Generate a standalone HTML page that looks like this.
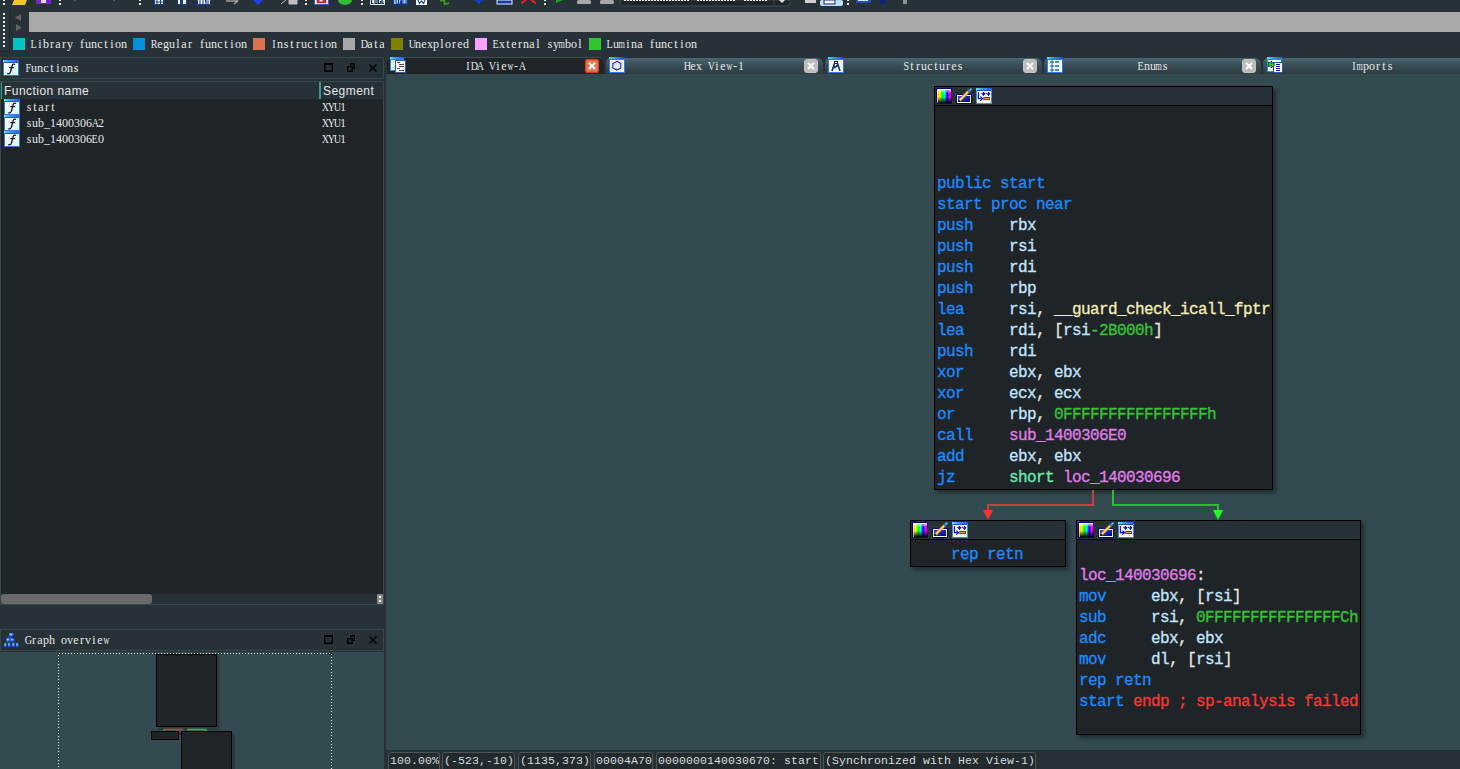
<!DOCTYPE html>
<html><head><meta charset="utf-8">
<style>
*{margin:0;padding:0;box-sizing:border-box}
html,body{width:1460px;height:769px;overflow:hidden;background:#263238;position:relative}
.a{position:absolute}
.ui{font-family:"Liberation Serif",serif;font-size:12px;color:#e8e8e8;white-space:pre;line-height:16px}
.code{font-family:"Liberation Mono",monospace;font-size:16px;letter-spacing:-0.6px;white-space:pre;line-height:21px;-webkit-text-stroke:0.3px currentColor}
.sans{font-family:"Liberation Sans",sans-serif;font-size:12px;letter-spacing:0.45px;color:#e8e8e8;white-space:pre}
.sq{position:absolute;top:38px;width:12px;height:12px}
.node{position:absolute;background:#1e2428;border:1px solid #000;box-shadow:3px 3px 4px rgba(0,0,0,0.38)}
.nh{position:absolute;left:0;top:0;right:0;height:19px;background:#263238;border-bottom:1px solid #000}
.kw{color:#1a8cff}.op{color:#c4e6ff}.pu{color:#e6e6da}.num{color:#34c434}.nm{color:#e07ee8}.yl{color:#f6eeb4}.sh{color:#62f0b2}.rd{color:#ff3434}
.st{border:1px solid #4e5456;border-radius:3px;background:#222a2e;font-family:"Liberation Mono",monospace;font-size:11.5px;color:#d4dede;white-space:pre;line-height:15px;padding-left:1px;padding-top:0px;letter-spacing:0.1px}
.ui i{font-style:normal;display:inline-block;width:6px;text-align:center}
.ui i.w b{font-weight:normal;display:inline-block;transform:scaleX(0.68);margin:0 -3px}
.ui i.u b{font-weight:normal;display:inline-block;transform:scaleX(0.84);margin:0 -3px}
</style></head><body>

<!-- toolbar -->
<div class="a" style="left:0;top:9px;width:10px;height:43px;background:#28363b;border-right:1px solid #1f2a2e;border-bottom:1px solid #1f2a2e"></div>
<svg class="a" style="left:0;top:0" width="960" height="52">
<g fill="#e8e8e8">
<rect x="3" y="0" width="2" height="1"/><rect x="3" y="3" width="2" height="2"/>
<rect x="3" y="13" width="2" height="2"/><rect x="3" y="17" width="2" height="2"/><rect x="3" y="21" width="2" height="2"/><rect x="3" y="25" width="2" height="2"/><rect x="3" y="29" width="2" height="2"/><rect x="3" y="33" width="2" height="2"/><rect x="3" y="37" width="2" height="2"/><rect x="3" y="41" width="2" height="2"/><rect x="3" y="45" width="2" height="2"/>
<rect x="59" y="0" width="2" height="1"/><rect x="59" y="3" width="2" height="2"/>
<rect x="139" y="0" width="2" height="1"/><rect x="139" y="3" width="2" height="2"/>
<rect x="305" y="0" width="2" height="1"/><rect x="305" y="3" width="2" height="2"/>
<rect x="361" y="0" width="2" height="1"/><rect x="361" y="3" width="2" height="2"/>
<rect x="544" y="0" width="2" height="1"/><rect x="544" y="3" width="2" height="2"/>
<rect x="847" y="0" width="2" height="1"/><rect x="847" y="3" width="2" height="2"/>
</g>
<path d="M15 17.5 L21 14 V21 Z" fill="#646464"/>
<path d="M22 27.5 L16 24 V31 Z" fill="#646464"/>
<path d="M14 0 H27 L25 5 H12 Z" fill="#f2c830"/>
<rect x="36" y="0" width="15" height="4" fill="#7a20d8"/><rect x="41" y="0" width="5" height="3" fill="#e0e0ff"/>
<path d="M74 1 L76 0 M113 1 L115 0" stroke="#707070"/>
<path d="M154.5 0 V4.5 H163.5 V0" fill="#f4f8ff" stroke="#1a3a90"/><path d="M157 0 V4 M160.5 0 V4 M155.5 2 H162.5" stroke="#1a3a90"/>
<path d="M177.5 0 V4.5 H186.5 V0" fill="#f4f8ff" stroke="#1a3a90"/><rect x="180" y="0" width="3" height="4" fill="#1a3a90"/>
<path d="M197.5 0 V4.5 H210.5 V0" fill="#f4f8ff" stroke="#1a3a90"/><path d="M200 0 V4 M203 0 V4 M205 0 H206 V4 M208 0 V4" stroke="#1a3a90"/>
<path d="M226 1 H236 L238 0 M234 4 L238 1" stroke="#a0a0a0" stroke-width="1.5"/>
<path d="M253 0 H263 L258 5 Z" fill="#2040f0"/>
<path d="M281 4 L286 0 M289 0 H297 V4 H289 Z" fill="#c0c0c0" stroke="#c0c0c0"/>
<path d="M314.5 0 V4.5 H328.5 V0" fill="#f4f4ff" stroke="#3060d0"/><path d="M317 0 H326 V3 H317 Z M320 0 V3 M323 0 V3" fill="#d02020" stroke="#d02020" stroke-width="0.5"/><rect x="319.5" y="0" width="3" height="1.5" fill="#fff"/>
<ellipse cx="345" cy="0" rx="7" ry="5" fill="#30c030"/>
<rect x="370" y="0" width="15" height="5" fill="#e8f2f8"/><path d="M371.5 0 V3.5 H373.5 M375 0 V3.5 H377 V0 M378.5 0 V3.5 H380.5 V1 M382 0 V3.5 H384 M382 2 H383.5" stroke="#103a50" stroke-width="1.2" fill="none"/>
<rect x="393" y="0" width="15" height="5" fill="#1030a0"/><path d="M394.5 0 V3.5 H396 V0 M397.5 0 V3.5 M399.5 3.5 V0 H401 M403 0 V3.5 M404.5 0 V3.5 M406 0 V3.5" stroke="#a0d8ff" stroke-width="1" fill="none"/>
<rect x="416" y="0" width="11" height="5" fill="#eef4fc"/><path d="M418 0 L419.5 3.5 L421.5 1 L423.5 3.5 L425 0" stroke="#204090" stroke-width="1.1" fill="none"/>
<path d="M440 1 Q444 -1 444 2 Q444 5 449 3 M444.5 0 V5" stroke="#40a020" stroke-width="1.4" fill="none"/>
<path d="M479 0 V4 M475 0 L479 2 L483 0" stroke="#2040f0" stroke-width="1.5"/>
<rect x="497" y="0" width="15" height="4" fill="#1a3aa0" stroke="#e0f0ff"/>
<path d="M521 3.5 L526 0 M536 3.5 L531 0" stroke="#f02020" stroke-width="1.8"/>
<path d="M556 0 H563 L556 3 Z" fill="#20a020"/>
<rect x="577" y="0" width="14" height="4" rx="1.5" fill="#a8a8a8"/>
<rect x="600" y="0" width="14" height="4" rx="1.5" fill="#a8a8a8"/>
<path d="M620 0 V2 Q620 6 625 6 H786 Q790 6 790 2 V0 Z" fill="#1e2428" stroke="#3a4c50"/>
<path d="M624 0 H690 M697 0 H736 M744 0 H768" stroke="#f0f0f0" stroke-width="2" stroke-dasharray="2 1"/>
<path d="M774 0 V5" stroke="#3a4c50"/>
<path d="M779 0 L782 3 L785 0 Z" fill="#e0e0e0"/>
<rect x="805" y="0" width="11" height="3" fill="#d0d0d0"/>
<rect x="820" y="0" width="23" height="6" rx="2" fill="#bfe0f8"/><rect x="824" y="0" width="11" height="4" fill="#f0f8ff" stroke="#102080"/>
<rect x="856" y="0" width="15" height="3" fill="#2050c0"/><rect x="858" y="0" width="10" height="1" fill="#e0e8ff"/>
<rect x="880" y="0" width="6" height="4" fill="#102080"/>
<rect x="903" y="0" width="4" height="4" fill="#909090"/>
</svg>
<!-- legend row -->
<div class="sq" style="left:13px;background:#00c4c4"></div>
<div class="a ui" style="left:31px;top:36px"><i class="u"><b>L</b></i><i>i</i><i>b</i><i>r</i><i>a</i><i>r</i><i>y</i><i>&nbsp;</i><i>f</i><i>u</i><i>n</i><i>c</i><i>t</i><i>i</i><i>o</i><i>n</i></div>
<div class="sq" style="left:133px;background:#0090dc"></div>
<div class="a ui" style="left:151px;top:36px"><i class="u"><b>R</b></i><i>e</i><i>g</i><i>u</i><i>l</i><i>a</i><i>r</i><i>&nbsp;</i><i>f</i><i>u</i><i>n</i><i>c</i><i>t</i><i>i</i><i>o</i><i>n</i></div>
<div class="sq" style="left:253px;background:#d87450"></div>
<div class="a ui" style="left:271px;top:36px"><i class="u"><b>I</b></i><i>n</i><i>s</i><i>t</i><i>r</i><i>u</i><i>c</i><i>t</i><i>i</i><i>o</i><i>n</i></div>
<div class="sq" style="left:343px;background:#a8a8a8"></div>
<div class="a ui" style="left:361px;top:36px"><i class="u"><b>D</b></i><i>a</i><i>t</i><i>a</i></div>
<div class="sq" style="left:391px;background:#808000"></div>
<div class="a ui" style="left:409px;top:36px"><i class="u"><b>U</b></i><i>n</i><i>e</i><i>x</i><i>p</i><i>l</i><i>o</i><i>r</i><i>e</i><i>d</i></div>
<div class="sq" style="left:475px;background:#ffa0ff"></div>
<div class="a ui" style="left:493px;top:36px"><i class="u"><b>E</b></i><i>x</i><i>t</i><i>e</i><i>r</i><i>n</i><i>a</i><i>l</i><i>&nbsp;</i><i>s</i><i>y</i><i class="w"><b>m</b></i><i>b</i><i>o</i><i>l</i></div>
<div class="sq" style="left:589px;background:#30c430"></div>
<div class="a ui" style="left:607px;top:36px"><i class="u"><b>L</b></i><i>u</i><i class="w"><b>m</b></i><i>i</i><i>n</i><i>a</i><i>&nbsp;</i><i>f</i><i>u</i><i>n</i><i>c</i><i>t</i><i>i</i><i>o</i><i>n</i></div>

<!-- nav band -->
<div class="a" style="left:29px;top:12px;width:1431px;height:20px;background:#a9a9a9"></div>

<!-- left panel: functions -->
<div class="a" style="left:0;top:57px;width:384px;height:22px;border:1px solid #34484a;background:#263238"></div>
<div class="a ui" style="left:25px;top:60px"><i class="u"><b>F</b></i><i>u</i><i>n</i><i>c</i><i>t</i><i>i</i><i>o</i><i>n</i><i>s</i></div>
<div class="a" style="left:0;top:81px;width:384px;height:524px;border:1px solid #34484a;background:#1e2428"></div>
<div class="a" style="left:1px;top:82px;width:382px;height:17px;background:#263238"></div>
<div class="a" style="left:1px;top:82px;width:1px;height:17px;background:#3a9a8a"></div>
<div class="a" style="left:319px;top:82px;width:2px;height:17px;background:#3a9a8a"></div>
<div class="a sans" style="left:4px;top:84px">Function name</div>
<div class="a sans" style="left:323px;top:84px">Segment</div>
<div class="a ui" style="left:26px;top:99px"><i>s</i><i>t</i><i>a</i><i>r</i><i>t</i></div>
<div class="a ui" style="left:26px;top:115px"><i>s</i><i>u</i><i>b</i><i>_</i><i>1</i><i>4</i><i>0</i><i>0</i><i>3</i><i>0</i><i>6</i><i class="u"><b>A</b></i><i>2</i></div>
<div class="a ui" style="left:26px;top:131px"><i>s</i><i>u</i><i>b</i><i>_</i><i>1</i><i>4</i><i>0</i><i>0</i><i>3</i><i>0</i><i>6</i><i class="u"><b>E</b></i><i>0</i></div>
<div class="a ui" style="left:322px;top:99px"><i class="u"><b>X</b></i><i class="u"><b>Y</b></i><i class="u"><b>U</b></i><i>1</i></div>
<div class="a ui" style="left:322px;top:115px"><i class="u"><b>X</b></i><i class="u"><b>Y</b></i><i class="u"><b>U</b></i><i>1</i></div>
<div class="a ui" style="left:322px;top:131px"><i class="u"><b>X</b></i><i class="u"><b>Y</b></i><i class="u"><b>U</b></i><i>1</i></div>
<div class="a" style="left:1px;top:594px;width:382px;height:10px;background:#263238"></div>
<div class="a" style="left:1px;top:594px;width:151px;height:10px;background:#6a6a6a;border-radius:3px"></div>

<div class="a" style="left:377px;top:594px;width:6px;height:10px;background:#8a8a8a;border-radius:1px"></div><div class="a" style="left:379px;top:596px;width:2px;height:2px;background:#fff"></div><div class="a" style="left:379px;top:600px;width:2px;height:2px;background:#fff"></div>
<!-- graph overview -->
<div class="a" style="left:0;top:629px;width:384px;height:22px;border:1px solid #34484a;background:#263238"></div>
<div class="a ui" style="left:25px;top:632px"><i class="u"><b>G</b></i><i>r</i><i>a</i><i>p</i><i>h</i><i>&nbsp;</i><i>o</i><i>v</i><i>e</i><i>r</i><i>v</i><i>i</i><i>e</i><i class="w"><b>w</b></i></div>
<div class="a" style="left:0;top:652px;width:384px;height:117px;background:#324a50"></div>

<!-- splitter -->
<div class="a" style="left:384px;top:75px;width:2px;height:694px;background:#263238"></div>

<!-- graph area -->
<div class="a" style="left:386px;top:74px;width:1074px;height:676px;background:#324a50"></div>


<svg width="0" height="0" style="position:absolute">
<defs>
<linearGradient id="rb" x1="0" y1="0" x2="1" y2="0">
<stop offset="0" stop-color="#ffa000"/><stop offset="0.18" stop-color="#ffff00"/><stop offset="0.38" stop-color="#00ff00"/><stop offset="0.55" stop-color="#00ffff"/><stop offset="0.72" stop-color="#0000ff"/><stop offset="0.88" stop-color="#ff00ff"/><stop offset="1" stop-color="#ff0060"/>
</linearGradient>
<linearGradient id="dk" x1="0" y1="0" x2="0" y2="1">
<stop offset="0" stop-color="#fff" stop-opacity="0.85"/><stop offset="0.3" stop-color="#fff" stop-opacity="0"/><stop offset="0.55" stop-color="#000" stop-opacity="0"/><stop offset="1" stop-color="#000" stop-opacity="1"/>
</linearGradient>
<linearGradient id="bl" x1="0" y1="0" x2="1" y2="1"><stop offset="0" stop-color="#3050e0"/><stop offset="1" stop-color="#000090"/></linearGradient>
<linearGradient id="tb" x1="0" y1="0" x2="1" y2="0"><stop offset="0" stop-color="#50e8ff"/><stop offset="0.4" stop-color="#3a9af0"/><stop offset="1" stop-color="#2a5ae0"/></linearGradient>
<symbol id="ic1" viewBox="0 0 16 16">
<rect x="0" y="0" width="16" height="16" fill="#000088"/>
<rect x="1" y="1" width="14" height="14" fill="url(#rb)"/>
<rect x="1" y="1" width="14" height="14" fill="url(#dk)"/>
<rect x="1" y="1" width="14" height="1" fill="#fff" opacity="0.9"/>
<rect x="1" y="1" width="1" height="14" fill="#fff" opacity="0.6"/>
</symbol>
<symbol id="ic2" viewBox="0 0 16 16">
<rect x="0" y="6" width="16" height="10" fill="#000088"/>
<rect x="1" y="7" width="14" height="8" fill="#f4fcff"/>
<rect x="2" y="8" width="12" height="6" fill="url(#bl)"/>
<path d="M3.6 12.4 L13.2 2.8" stroke="#e07a20" stroke-width="3"/>
<path d="M3.6 12.4 L13.2 2.8" stroke="#ffe040" stroke-width="1.6"/>
<path d="M4 12 L12.6 3.4" stroke="#fff" stroke-width="0.7" stroke-dasharray="1 1"/>
<path d="M13 3 L15 1" stroke="#2a7ab0" stroke-width="3" stroke-linecap="round"/>
<path d="M13.6 2.4 L14.6 1.4" stroke="#fff" stroke-width="1"/>
<rect x="2.5" y="12.3" width="1.6" height="1.6" fill="#000"/>
</symbol>
<symbol id="ic3" viewBox="0 0 16 16">
<rect x="0" y="0" width="16" height="16" fill="#3a8af0"/>
<rect x="0" y="0" width="16" height="2" fill="url(#tb)"/>
<rect x="1" y="2" width="14" height="1" fill="#2a50d8"/>
<rect x="1" y="3" width="14" height="12" fill="#fbfeff"/>
<path d="M2.4 4.3 V10.6 H6.8" stroke="#0000f0" stroke-width="1.2" fill="none"/>
<path d="M4.3 8.6 L6.6 10.6 L4.3 12.6" stroke="#0000f0" stroke-width="1.1" fill="none"/>
<path d="M5.4 5.4 H15" stroke="#0000f0" stroke-width="1.1" stroke-dasharray="1.4 1"/>
<path d="M7.5 4 V7.5 M6.3 6.3 L7.5 7.6 L8.7 6.3 M12.5 4 V7.5 M11.3 6.3 L12.5 7.6 L13.7 6.3" stroke="#0000f0" stroke-width="1" fill="none"/>
<rect x="7.2" y="9" width="6.8" height="3" rx="0.8" fill="#900060"/>
<rect x="8" y="10" width="5.2" height="1.2" fill="#f0a040"/>
</symbol>

<linearGradient id="wg" x1="0" y1="0" x2="1" y2="0"><stop offset="0" stop-color="#40e0ff"/><stop offset="0.5" stop-color="#3080f0"/><stop offset="1" stop-color="#2040d0"/></linearGradient>
<symbol id="win" viewBox="0 0 16 16">
<rect x="0" y="0" width="16" height="16" fill="#2f7ae8"/>
<rect x="0" y="0" width="16" height="2" fill="url(#wg)"/>
<rect x="1" y="3" width="14" height="12" fill="#f4fcff"/>
</symbol>
<symbol id="tic0" viewBox="0 0 16 16">
<rect x="0" y="0" width="14" height="14" fill="#2f8af0"/>
<rect x="0" y="0" width="14" height="2" fill="url(#tb)"/>
<rect x="1" y="3" width="12" height="10" fill="#e6faff"/>
<rect x="5" y="3" width="11" height="13" fill="#2a5aa8"/>
<rect x="6" y="4" width="9" height="11" fill="#f6faff"/>
<path d="M7 5.5h3M9 7.5h5M9 9.5h5M7 11.5h3M9 13.5h5" stroke="#505050" stroke-width="1"/>
</symbol>
<symbol id="tic1" viewBox="0 0 16 16">
<use href="#win"/>
<path d="M7.8 4.3 L11.8 6.5 V10.9 L7.8 13.1 L3.8 10.9 V6.5 Z" fill="#e0ecff" stroke="#1a1aff" stroke-width="1.1"/>
</symbol>
<symbol id="tic2" viewBox="0 0 16 16">
<use href="#win"/>
<path d="M6.5 4.5 H9.5 V6.5 H6.5 Z" fill="none" stroke="#102a70" stroke-width="1.2"/>
<path d="M6.5 6.5 L4 14 M9.5 6.5 L12 14 M6 11 L10 8" stroke="#102a70" stroke-width="1.6" fill="none"/>
</symbol>
<symbol id="tic3" viewBox="0 0 16 16">
<use href="#win"/>
<path d="M5 3.5 L6.5 5 L5 6.5 L3.5 5 Z M5 7.5 L6.5 9 L5 10.5 L3.5 9 Z M5 11.5 L6.5 13 L5 14.5 L3.5 13 Z" fill="#10d0f0" stroke="#0a2ab0" stroke-width="0.8"/>
<path d="M8 5h4M8 9h4M8 13h4" stroke="#1060e0" stroke-width="1.4"/>
</symbol>
<symbol id="tic4" viewBox="0 0 16 16">
<rect x="0" y="0" width="15" height="15" fill="#2f8af0"/>
<rect x="0" y="0" width="15" height="2" fill="url(#tb)"/>
<rect x="1" y="3" width="13" height="11" fill="#f4fcff"/>
<rect x="6" y="5" width="10" height="11" fill="#2a5aa8"/>
<rect x="7" y="6" width="8" height="9" fill="#f6faff"/>
<rect x="9" y="7" width="4" height="1" fill="#1010b0"/><rect x="9" y="9" width="4" height="1" fill="#1010b0"/><rect x="9" y="11" width="4" height="1" fill="#1010b0"/><rect x="9" y="13" width="4" height="1" fill="#1010b0"/>
<path d="M1.5 5 L4.5 6.5 L4 4 L8 7.5 L4 11 L4.5 8.5 L1.5 9.5 Z" fill="#30d030" stroke="#004a10" stroke-width="0.9"/>
</symbol>
<linearGradient id="wf" x1="0" y1="0" x2="1" y2="1"><stop offset="0" stop-color="#ffffff"/><stop offset="1" stop-color="#d8f6ff"/></linearGradient>
<symbol id="fic" viewBox="0 0 16 16">
<rect x="0" y="0" width="16" height="16" fill="#3a7ae0"/>
<rect x="0" y="0" width="16" height="2" fill="url(#tb)"/>
<rect x="1" y="2" width="14" height="1" fill="#2a50d8"/>
<rect x="1" y="3" width="14" height="12" fill="url(#wf)"/>
<path d="M12 4.6 C10.8 3.9 9.7 4.1 9.3 5.3 L7.3 12.5 C6.9 13.7 5.8 14 4.2 13.7" stroke="#0a1838" stroke-width="1.3" fill="none"/>
<path d="M6.2 7.6 H10.8" stroke="#0a1838" stroke-width="1.2"/>
</symbol>
<radialGradient id="bx" cx="0.35" cy="0.4" r="0.7"><stop offset="0" stop-color="#a0d8ff"/><stop offset="0.5" stop-color="#3a80f0"/><stop offset="1" stop-color="#0a30c0"/></radialGradient>
<symbol id="ovic" viewBox="0 0 16 16">
<path d="M4.6 3.5 V5.2 M6.4 3.5 V5.2 M3 8.7 V10 M5.5 8.7 V10 M8.5 8.7 V10 M11 8.7 V10" stroke="#1a70e0" stroke-width="0.9"/>
<rect x="5" y="0" width="5" height="3.5" fill="url(#bx)"/>
<rect x="2.2" y="5.1" width="4.4" height="3.6" fill="url(#bx)"/>
<rect x="6.4" y="5.1" width="4.2" height="3.6" fill="url(#bx)"/>
<rect x="0.1" y="10" width="2.8" height="3.9" fill="url(#bx)"/>
<rect x="4" y="10" width="2.8" height="3.9" fill="url(#bx)"/>
<rect x="8.1" y="10" width="2.9" height="3.9" fill="url(#bx)"/>
<rect x="12" y="10" width="2.9" height="3.9" fill="url(#bx)"/>
</symbol>
<symbol id="pbtn" viewBox="0 0 56 10">
<path d="M0.75 0.75 H8.25 V8.25 H0.75 Z" fill="none" stroke="#000" stroke-width="1.5"/>
<rect x="0" y="0" width="9" height="2" fill="#000"/>
<path d="M26.75 0.75 H30.25 V5.25 H26.75 Z" fill="none" stroke="#000" stroke-width="1.5"/>
<path d="M23.75 3.75 H28.25 V8.25 H23.75 Z" fill="#263238" stroke="#000" stroke-width="1.5"/>
<path d="M45.5 1.5 L52.5 8.5 M52.5 1.5 L45.5 8.5" stroke="#000" stroke-width="1.4"/>
</symbol>
</defs></svg>
<div class="node" style="left:934px;top:86px;width:339px;height:404px"><div class="nh"><svg class="a" style="left:1px;top:1px" width="16" height="16"><use href="#ic1"/></svg><svg class="a" style="left:21px;top:1px" width="16" height="16"><use href="#ic2"/></svg><svg class="a" style="left:41px;top:1px" width="16" height="16"><use href="#ic3"/></svg></div><div class="a code" style="left:2px;top:24px">


<span class="kw">public start</span>
<span class="kw">start proc near</span>
<span class="kw">push</span>    <span class="op">rbx</span>
<span class="kw">push</span>    <span class="op">rsi</span>
<span class="kw">push</span>    <span class="op">rdi</span>
<span class="kw">push</span>    <span class="op">rbp</span>
<span class="kw">lea</span>     <span class="op">rsi</span><span class="pu">,</span><span class="op"> </span><span class="yl">__guard_check_icall_fptr</span>
<span class="kw">lea</span>     <span class="op">rdi</span><span class="pu">,</span><span class="op"> </span><span class="pu">[</span><span class="op">rsi</span><span class="num">-2B000h</span><span class="pu">]</span>
<span class="kw">push</span>    <span class="op">rdi</span>
<span class="kw">xor</span>     <span class="op">ebx</span><span class="pu">,</span><span class="op"> ebx</span>
<span class="kw">xor</span>     <span class="op">ecx</span><span class="pu">,</span><span class="op"> ecx</span>
<span class="kw">or</span>      <span class="op">rbp</span><span class="pu">,</span><span class="op"> </span><span class="num">0FFFFFFFFFFFFFFFFh</span>
<span class="kw">call</span>    <span class="nm">sub_1400306E0</span>
<span class="kw">add</span>     <span class="op">ebx</span><span class="pu">,</span><span class="op"> ebx</span>
<span class="kw">jz</span>      <span class="sh">short</span> <span class="nm">loc_140030696</span></div></div>
<div class="node" style="left:910px;top:520px;width:156px;height:47px"><div class="nh"><svg class="a" style="left:1px;top:1px" width="16" height="16"><use href="#ic1"/></svg><svg class="a" style="left:21px;top:1px" width="16" height="16"><use href="#ic2"/></svg><svg class="a" style="left:41px;top:1px" width="16" height="16"><use href="#ic3"/></svg></div><div class="a code" style="left:40px;top:24px"><span class="kw">rep retn</span></div></div>
<div class="node" style="left:1076px;top:520px;width:285px;height:215px"><div class="nh"><svg class="a" style="left:1px;top:1px" width="16" height="16"><use href="#ic1"/></svg><svg class="a" style="left:21px;top:1px" width="16" height="16"><use href="#ic2"/></svg><svg class="a" style="left:41px;top:1px" width="16" height="16"><use href="#ic3"/></svg></div><div class="a code" style="left:2px;top:24px">
<span class="nm">loc_140030696</span><span class="pu">:</span>
<span class="kw">mov</span>     <span class="op">ebx</span><span class="pu">,</span><span class="op"> </span><span class="pu">[</span><span class="op">rsi</span><span class="pu">]</span>
<span class="kw">sub</span>     <span class="op">rsi</span><span class="pu">,</span><span class="op"> </span><span class="num">0FFFFFFFFFFFFFFFCh</span>
<span class="kw">adc</span>     <span class="op">ebx</span><span class="pu">,</span><span class="op"> ebx</span>
<span class="kw">mov</span>     <span class="op">dl</span><span class="pu">,</span><span class="op"> </span><span class="pu">[</span><span class="op">rsi</span><span class="pu">]</span>
<span class="kw">rep retn</span>
<span class="kw">start</span> <span class="rd">endp ; sp-analysis failed</span></div></div>
<svg class="a" style="left:0;top:0" width="1460" height="769">
<path d="M1093 490 V505 H988 V511" stroke="#c84040" stroke-width="2" fill="none"/>
<path d="M983 510 L993 510 L988 520 Z" fill="#ff3232"/>
<path d="M1113 490 V505 H1218 V511" stroke="#28c028" stroke-width="2" fill="none"/>
<path d="M1213 510 L1223 510 L1218 520 Z" fill="#1eff1e"/>
</svg>
<svg class="a" style="left:0;top:652px" width="384" height="117">
<rect x="58.5" y="1.5" width="273" height="130" fill="none" stroke="#e8e8e8" stroke-width="1" stroke-dasharray="1 2" shape-rendering="crispEdges"/>
<rect x="158" y="4" width="62" height="74" fill="#000" opacity="0.18"/><rect x="156.5" y="2.5" width="60" height="72" fill="#1e2428" stroke="#000"/>
<path d="M164 79 V77.5 H183" stroke="#d04040" stroke-width="1.5" fill="none"/>
<path d="M187 77.5 H206 V79" stroke="#30c030" stroke-width="1.5" fill="none"/>
<rect x="151.5" y="79.5" width="27" height="8" fill="#1e2428" stroke="#000"/>
<rect x="183" y="81" width="52" height="50" fill="#000" opacity="0.18"/><rect x="181.5" y="79.5" width="50" height="50" fill="#1e2428" stroke="#000"/>
</svg>
<svg class="a" style="left:3px;top:60px" width="16" height="16"><use href="#fic"/></svg>
<svg class="a" style="left:324px;top:63px" width="56" height="10"><use href="#pbtn"/></svg>
<svg class="a" style="left:4px;top:99px" width="16" height="16"><use href="#fic"/></svg>
<svg class="a" style="left:4px;top:115px" width="16" height="16"><use href="#fic"/></svg>
<svg class="a" style="left:4px;top:131px" width="16" height="16"><use href="#fic"/></svg>
<svg class="a" style="left:4px;top:633px" width="16" height="16"><use href="#ovic"/></svg>
<svg class="a" style="left:324px;top:635px" width="56" height="10"><use href="#pbtn"/></svg>
<!-- status bar -->
<div class="a" style="left:386px;top:750px;width:1074px;height:19px;background:#263238"></div>
<div class="a st" style="left:388px;top:752px;width:52px;height:20px">100.00%</div>
<div class="a st" style="left:442px;top:752px;width:73px;height:20px">(-523,-10)</div>
<div class="a st" style="left:518px;top:752px;width:73px;height:20px">(1135,373)</div>
<div class="a st" style="left:594px;top:752px;width:59px;height:20px">00004A70</div>
<div class="a st" style="left:656px;top:752px;width:165px;height:20px">0000000140030670: start</div>
<div class="a st" style="left:823px;top:752px;width:213px;height:20px">(Synchronized with Hex View-1)</div>
<div class="a" style="left:386px;top:74px;width:1074px;height:2px;background:#37494a"></div>
<div class="a" style="left:387px;top:57px;width:217px;height:17px;border-radius:5px 6px 0 0;background:#1e2428;border-top:1px solid #3c5052"></div>
<div class="a ui" style="left:465px;top:58px"><i class="u"><b>I</b></i><i class="u"><b>D</b></i><i class="u"><b>A</b></i><i>&nbsp;</i><i class="u"><b>V</b></i><i>i</i><i>e</i><i class="w"><b>w</b></i><i>-</i><i class="u"><b>A</b></i></div>
<svg class="a" style="left:390px;top:57px" width="16" height="16"><use href="#tic0"/></svg>
<svg class="a" style="left:585px;top:59px" width="14" height="14"><rect x="0.5" y="0.5" width="13" height="13" rx="2.5" fill="#e07a52" stroke="#e83c1c" stroke-width="1.3"/><path d="M4 4 L10 10 M10 4 L4 10" stroke="#fff" stroke-width="2"/></svg>
<div class="a" style="left:606px;top:58px;width:217px;height:16px;border-radius:5px 6px 0 0;background:linear-gradient(#4c6670,#3a4e56 45%,#2c3c42)"></div>
<div class="a ui" style="left:684px;top:58px"><i class="u"><b>H</b></i><i>e</i><i>x</i><i>&nbsp;</i><i class="u"><b>V</b></i><i>i</i><i>e</i><i class="w"><b>w</b></i><i>-</i><i>1</i></div>
<svg class="a" style="left:609px;top:57px" width="16" height="16"><use href="#tic1"/></svg>
<svg class="a" style="left:804px;top:59px" width="14" height="14"><rect x="0.5" y="0.5" width="13" height="13" rx="2.5" fill="#bcbcbc" stroke="#c4c4c4"/><path d="M4 4 L10 10 M10 4 L4 10" stroke="#fff" stroke-width="2"/></svg>
<div class="a" style="left:825px;top:58px;width:217px;height:16px;border-radius:5px 6px 0 0;background:linear-gradient(#4c6670,#3a4e56 45%,#2c3c42)"></div>
<div class="a ui" style="left:903px;top:58px"><i class="u"><b>S</b></i><i>t</i><i>r</i><i>u</i><i>c</i><i>t</i><i>u</i><i>r</i><i>e</i><i>s</i></div>
<svg class="a" style="left:828px;top:57px" width="16" height="16"><use href="#tic2"/></svg>
<svg class="a" style="left:1023px;top:59px" width="14" height="14"><rect x="0.5" y="0.5" width="13" height="13" rx="2.5" fill="#bcbcbc" stroke="#c4c4c4"/><path d="M4 4 L10 10 M10 4 L4 10" stroke="#fff" stroke-width="2"/></svg>
<div class="a" style="left:1044px;top:58px;width:217px;height:16px;border-radius:5px 6px 0 0;background:linear-gradient(#4c6670,#3a4e56 45%,#2c3c42)"></div>
<div class="a ui" style="left:1138px;top:58px"><i class="u"><b>E</b></i><i>n</i><i>u</i><i class="w"><b>m</b></i><i>s</i></div>
<svg class="a" style="left:1047px;top:57px" width="16" height="16"><use href="#tic3"/></svg>
<svg class="a" style="left:1242px;top:59px" width="14" height="14"><rect x="0.5" y="0.5" width="13" height="13" rx="2.5" fill="#bcbcbc" stroke="#c4c4c4"/><path d="M4 4 L10 10 M10 4 L4 10" stroke="#fff" stroke-width="2"/></svg>
<div class="a" style="left:1263px;top:58px;width:217px;height:16px;border-radius:5px 6px 0 0;background:linear-gradient(#4c6670,#3a4e56 45%,#2c3c42)"></div>
<div class="a ui" style="left:1351px;top:58px"><i class="u"><b>I</b></i><i class="w"><b>m</b></i><i>p</i><i>o</i><i>r</i><i>t</i><i>s</i></div>
<svg class="a" style="left:1267px;top:57px" width="16" height="16"><use href="#tic4"/></svg>


</body></html>
